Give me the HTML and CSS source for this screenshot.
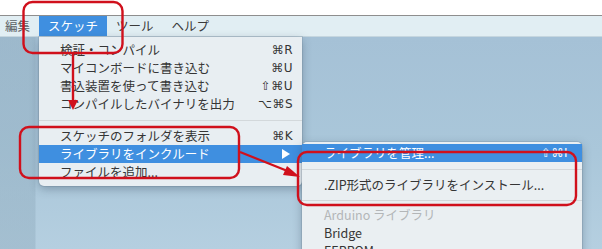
FILE: index.html
```html
<!DOCTYPE html>
<html lang="ja">
<head>
<meta charset="utf-8">
<title>スケッチ メニュー</title>
<link rel="stylesheet" href="styles.css">
</head>
<body>
<div class="screen">
  <div class="topstrip"></div>
  <div class="menubar">
    <span class="mb-item first">編集</span>
    <span class="mb-item active">スケッチ</span>
    <span class="mb-item">ツール</span>
    <span class="mb-item">ヘルプ</span>
  </div>
  <div class="desktop">
    <div class="menu main-menu">
      <div class="item"><span>検証・コンパイル</span><span class="key">⌘R</span></div>
      <div class="item"><span>マイコンボードに書き込む</span><span class="key">⌘U</span></div>
      <div class="item"><span>書込装置を使って書き込む</span><span class="key">⇧⌘U</span></div>
      <div class="item"><span>コンパイルしたバイナリを出力</span><span class="key">⌥⌘S</span></div>
      <div class="sep"></div>
      <div class="item"><span>スケッチのフォルダを表示</span><span class="key">⌘K</span></div>
      <div class="item selected"><span>ライブラリをインクルード</span><span class="arrow"></span></div>
      <div class="item"><span>ファイルを追加...</span></div>
    </div>
    <div class="menu sub-menu">
      <div class="item selected"><span>ライブラリを管理...</span><span class="key">⇧⌘I</span></div>
      <div class="sep"></div>
      <div class="item"><span>.ZIP形式のライブラリをインストール...</span></div>
      <div class="sep small"></div>
      <div class="item disabled"><span>Arduino ライブラリ</span></div>
      <div class="item"><span>Bridge</span></div>
      <div class="item"><span>EEPROM</span></div>
    </div>
  </div>
  <svg class="annot" width="602" height="249" viewBox="0 0 602 249">
    <g fill="none" stroke="#d0101c" stroke-width="2.4">
      <rect x="23.5" y="2" width="99" height="51" rx="9"/>
      <rect x="20" y="127" width="219" height="51" rx="9"/>
      <rect x="298" y="152" width="278" height="53" rx="9"/>
      <line x1="73" y1="53" x2="73" y2="101"/>
      <line x1="240" y1="152" x2="290" y2="172"/>
    </g>
    <g fill="#d0101c">
      <polygon points="68,100 78,100 73,110"/>
      <polygon points="287,166 283,175 300,177"/>
    </g>
  </svg>
</div>
</body>
</html>
```
FILE: styles.css
```css
* { box-sizing: border-box; }
html, body { margin: 0; padding: 0; }
body {
  width: 602px;
  height: 249px;
  overflow: hidden;
  font-family: "Noto Sans CJK JP", "Noto Sans", sans-serif;
  font-size: 12.5px;
  color: #353535;
}
.screen {
  position: relative;
  width: 602px;
  height: 249px;
  display: flex;
  flex-direction: column;
  background: #fff;
}
.topstrip {
  height: 16px;
  background: #ffffff;
  border-bottom: 1px solid #8e8e8e;
  flex: none;
}
.menubar {
  height: 21px;
  flex: none;
  display: flex;
  align-items: stretch;
  background: #e1eef3;
  border-bottom: 1px solid #c5d6df;
}
.mb-item {
  display: flex;
  align-items: center;
  padding: 0 9px;
  color: #3a3a3a;
  line-height: 1;
}
.mb-item.first { padding-left: 5px; color: #5a5f63; }
.mb-item.active { background: #3f8fe0; color: #fff; }
.desktop {
  position: relative;
  flex: 1;
  background:
    linear-gradient(90deg, rgba(150,178,196,0.55) 0, rgba(150,178,196,0.55) 35px, rgba(0,0,0,0) 36px),
    linear-gradient(180deg, #a5c1d6 0%, #aac7da 55%, #b5cfe0 100%);
}
.menu {
  position: absolute;
  background: #e8eef2;
  border-radius: 0 0 5px 5px;
  box-shadow: 0 3px 10px rgba(40,60,80,0.35), 0 0 0 1px rgba(120,140,155,0.25);
  display: flex;
  flex-direction: column;
}
.main-menu {
  left: 39px;
  top: 0;
  width: 263px;
  padding: 4px 0 5px;
}
.sub-menu {
  left: 302px;
  top: 105px;
  width: 280px;
  padding: 2px 0 5px;
  border-radius: 5px;
  background: #eaeff2;
}
.item {
  height: 18px;
  line-height: 18px;
  display: flex;
  justify-content: space-between;
  align-items: center;
  padding: 0 9px 0 21px;
  white-space: nowrap;
}
.sub-menu .item { padding: 0 14px 0 22px; }
.item.selected { background: #3f8fe0; color: #fff; }
.item.disabled { color: #b3b6b8; }
.key {
  font-family: "DejaVu Sans", "Liberation Sans", sans-serif;
  font-size: 12px;
  letter-spacing: 0.5px;
}
.arrow {
  width: 0;
  height: 0;
  border-left: 8px solid #fff;
  border-top: 5px solid transparent;
  border-bottom: 5px solid transparent;
  margin-right: 3px;
}
.sep {
  height: 14px;
  display: flex;
  align-items: center;
}
.sep::before {
  content: "";
  display: block;
  width: 100%;
  height: 1px;
  background: #d3d8db;
}
.sep.small { height: 12px; }
.annot {
  position: absolute;
  left: 0;
  top: 0;
  pointer-events: none;
}
```
